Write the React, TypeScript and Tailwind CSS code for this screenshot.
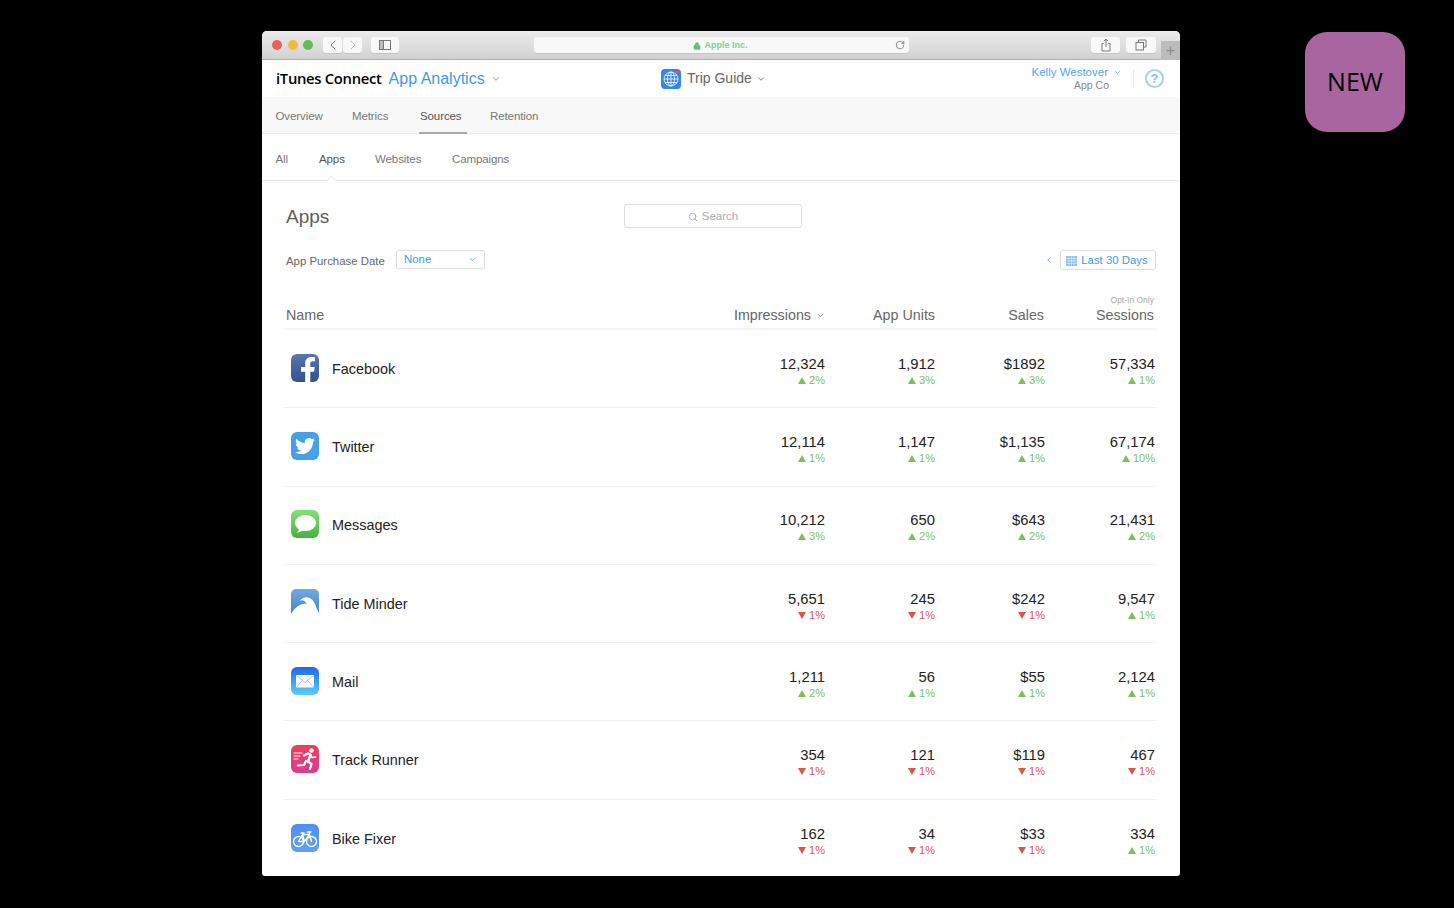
import type { ReactNode } from "react"
import { ChevronDown, ChevronLeft, ChevronRight, RotateCw, Search, Lock } from "lucide-react"
import { FaFacebookF, FaTwitter } from "react-icons/fa"

type Stat = [string, number]
interface Row {
    name: string
    icon: ReactNode
    stats: Stat[]
}

const iconBox = "w-7 h-7 rounded-[6px] flex items-center justify-center overflow-hidden shrink-0"

const rows: Row[] = [
    {
        name: "Facebook",
        icon: (
            <div className={`${iconBox} bg-linear-to-b from-[#5a76b0] to-[#35508f]`}>
                <FaFacebookF className="text-white w-[26px] h-[26px] translate-x-[3px] translate-y-[2px]" />
            </div>
        ),
        stats: [["12,324", 2], ["1,912", 3], ["$1892", 3], ["57,334", 1]],
    },
    {
        name: "Twitter",
        icon: (
            <div className={`${iconBox} bg-[#45a0e9]`}>
                <FaTwitter className="text-white w-[20px] h-[20px]" />
            </div>
        ),
        stats: [["12,114", 1], ["1,147", 1], ["$1,135", 1], ["67,174", 10]],
    },
    {
        name: "Messages",
        icon: (
            <div className={`${iconBox} bg-linear-to-b from-[#86e27c] to-[#47b03f]`}>
                <svg viewBox="0 0 28 28" className="w-7 h-7">
                    <ellipse cx="14.5" cy="13" rx="10.5" ry="8" fill="#fff" />
                    <path d="M8 18c0 2-1 3.500-2.500 4.500 3 0 5-1 6.500-2.500z" fill="#fff" />
                </svg>
            </div>
        ),
        stats: [["10,212", 3], ["650", 2], ["$643", 2], ["21,431", 2]],
    },
    {
        name: "Tide Minder",
        icon: (
            <div className="w-7 h-7 shrink-0">
                <svg viewBox="0 0 28 28" className="w-7 h-7">
                    <defs>
                        <linearGradient id="tide" x1="0" y1="0" x2="0" y2="1">
                            <stop offset="0" stopColor="#74a9dd" />
                            <stop offset="1" stopColor="#3f86d2" />
                        </linearGradient>
                    </defs>
                    <path d="M5 0h18a5 5 0 0 1 5 5v19c-2-3-3.500-9-6-12.500C19 7.500 12.500 6.500 8.500 12c2.500-1.500 6-.5 7 3C10 14 4 18 0 25V5a5 5 0 0 1 5-5z" fill="url(#tide)" />
                </svg>
            </div>
        ),
        stats: [["5,651", -1], ["245", -1], ["$242", -1], ["9,547", 1]],
    },
    {
        name: "Mail",
        icon: (
            <div className={`${iconBox} bg-linear-to-b from-[#2168e6] to-[#5fcdf8]`}>
                <svg viewBox="0 0 28 28" className="w-7 h-7" fill="none">
                    <rect x="5" y="8" width="18" height="12.500" rx="1" fill="#fff" />
                    <path d="M5.500 8.500 14 15.500l8.500-7M5.500 20l6-6.500M22.500 20l-6-6.500" stroke="#8cc4f3" strokeWidth="0.9" />
                </svg>
            </div>
        ),
        stats: [["1,211", 2], ["56", 1], ["$55", 1], ["2,124", 1]],
    },
    {
        name: "Track Runner",
        icon: (
            <div className={`${iconBox} bg-linear-to-b from-[#ee3e58] to-[#d93c8c]`}>
                <svg viewBox="0 0 28 28" className="w-7 h-7" fill="none" stroke="#fff" strokeLinecap="round" strokeLinejoin="round">
                    <circle cx="20.500" cy="5.500" r="2.300" fill="#fff" stroke="none" />
                    <path d="M3 8h8M3 11h6M3 14h4" strokeWidth="1" />
                    <path d="M13 10.500l4-2 2.500 1-2.500 7" strokeWidth="2.400" />
                    <path d="M19.500 10l1.500 2.500 3.500-.5" strokeWidth="1.700" />
                    <path d="M17 16.500l3.500 2.500-1.500 5" strokeWidth="2.200" />
                    <path d="M15 16l-2 4-6 .5" strokeWidth="2.200" />
                </svg>
            </div>
        ),
        stats: [["354", -1], ["121", -1], ["$119", -1], ["467", -1]],
    },
    {
        name: "Bike Fixer",
        icon: (
            <div className={`${iconBox} bg-linear-to-b from-[#4d8ff0] to-[#5fa3ef]`}>
                <svg viewBox="0 0 28 28" className="w-7 h-7" fill="none" stroke="#fff" strokeWidth="1.400" strokeLinejoin="round" strokeLinecap="round">
                    <circle cx="7.500" cy="17.500" r="5" />
                    <circle cx="20.500" cy="17.500" r="5" />
                    <path d="M7.500 17.500l4-7h7l2 7M18.500 10.500l-5 7h-6M11.500 10.500l2 7M18 8l.5 2.500M16.500 8H20M10 9h3" />
                </svg>
            </div>
        ),
        stats: [["162", -1], ["34", -1], ["$33", -1], ["334", 1]],
    },
]

const Delta = ({ value }: { value: number }) => {
    const up = value > 0
    return (
        <div className={`flex items-center justify-end gap-[3px] mt-px text-[11px] leading-[13px] ${up ? "text-[#7dbf5e]" : "text-[#d8574c]"}`}>
            <svg viewBox="0 0 8 7" className="w-2 h-[7px]">
                <path d={up ? "M4 0l4 7H0z" : "M4 7L0 0h8z"} fill="currentColor" />
            </svg>
            <span>{Math.abs(value)}%</span>
        </div>
    )
}

const ToolButton = ({ className, children }: { className: string; children?: ReactNode }) => (
    <div className={`h-4 rounded-[3px] bg-[#f8f8f8] flex items-center justify-center shadow-[0_1px_0_#c4c4c4] ${className}`}>
        {children}
    </div>
)

const App = () => {
    return (
        <div className="min-h-screen bg-black flex items-start pl-[262px] pt-[31px] font-['Liberation_Sans',sans-serif]">
            <div className="w-[918px] h-[845px] bg-white rounded-t-[5px] rounded-b-[3px] overflow-hidden shrink-0">
                {/* toolbar */}
                <div className="h-[29px] flex bg-linear-to-b from-[#ebebeb] to-[#d2d2d2] border-b border-[#b2b2b2]">
                    <div className="flex items-center gap-[5.500px] pl-[10px]">
                        <span className="w-[10px] h-[10px] rounded-full bg-[#ee5f57]" />
                        <span className="w-[10px] h-[10px] rounded-full bg-[#f5b83f]" />
                        <span className="w-[10px] h-[10px] rounded-full bg-[#5cc04a]" />
                    </div>
                    <div className="flex items-center ml-[10px] gap-px">
                        <ToolButton className="w-[19px]"><ChevronLeft className="w-4 h-4 text-[#777]" strokeWidth={1.5} /></ToolButton>
                        <ToolButton className="w-[19px]"><ChevronRight className="w-4 h-4 text-[#bbb]" strokeWidth={1.5} /></ToolButton>
                    </div>
                    <div className="flex items-center ml-[9px]">
                        <ToolButton className="w-[28px]">
                            <svg viewBox="0 0 12 10" className="w-3 h-[10px]" fill="none" stroke="#777">
                                <rect x="0.5" y="0.5" width="11" height="9" />
                                <path d="M4.500 0.500v9" />
                                <rect x="1" y="1" width="3" height="8" fill="#bbb" stroke="none" />
                            </svg>
                        </ToolButton>
                    </div>
                    <div className="flex items-center ml-[135px]">
                        <ToolButton className="w-[375px] relative pt-px pr-[2px]">
                            <Lock className="w-2 h-2 text-[#62c07f] mr-[3px]" fill="currentColor" />
                            <span className="text-[9px] font-bold text-[#7fcf9a]">Apple Inc.</span>
                            <RotateCw className="absolute right-[4px] top-[3px] w-[10px] h-[10px] text-[#777]" />
                        </ToolButton>
                    </div>
                    <div className="flex items-center ml-auto gap-[6px]">
                        <ToolButton className="w-[29px]">
                            <svg viewBox="0 0 12 14" className="w-3 h-[14px]" fill="none" stroke="#777">
                                <path d="M3.500 5.500H2v7.500h8V5.500H8.500M6 9V1M4 3l2-2 2 2" />
                            </svg>
                        </ToolButton>
                        <ToolButton className="w-[30px]">
                            <svg viewBox="0 0 12 12" className="w-3 h-3" fill="none" stroke="#777">
                                <path d="M3.500 3V1h7.500v7H8.500" />
                                <rect x="1" y="3.500" width="7.500" height="7.500" />
                            </svg>
                        </ToolButton>
                    </div>
                    <div className="ml-[5px] w-[19px] h-[19px] mt-[10px] bg-[#bcbcbc] text-[#8a8a8a] flex items-center justify-center text-[16px] leading-none">+</div>
                </div>

                {/* app header */}
                <div className="h-[37px] flex items-center">
                    <div className="w-[399px] flex items-baseline pl-[14px]">
                        <span className="font-['Open_Sans',sans-serif] font-semibold text-[14.800px] tracking-[-0.3px] text-black">iTunes Connect</span>
                        <span className="ml-[7px] text-[16px] text-[#3f97f6]">App Analytics</span>
                        <ChevronDown className="ml-[6px] w-[10px] h-[10px] text-[#3f97f6] self-center" />
                    </div>
                    <div className="flex items-center">
                        <div className="w-5 h-5 rounded-[4px] bg-[#3585f1] relative flex items-center justify-center">
                            <svg viewBox="0 0 16 16" className="w-4 h-4" fill="none" stroke="#fff" strokeWidth="0.8">
                                <circle cx="8" cy="8" r="7" />
                                <ellipse cx="8" cy="8" rx="3.500" ry="7" />
                                <path d="M8 1v14M1 8h14M2 4.500h12M2 11.500h12" />
                            </svg>
                            <span className="absolute right-[1px] top-[1px] w-[4px] h-[4px] rounded-full bg-[#e8544a]" />
                        </div>
                        <span className="ml-[6px] text-[14px] text-[#666]">Trip Guide</span>
                        <ChevronDown className="ml-[4px] w-[10px] h-[10px] text-[#666]" />
                    </div>
                    <div className="ml-auto flex items-center pr-[16px]">
                        <div className="flex flex-col items-end pt-[1px] mr-[11px]">
                            <div className="flex items-center text-[11.500px] leading-[13px] text-[#56a6f8]">
                                Kelly Westover
                                <ChevronDown className="ml-[5px] w-[9px] h-[9px]" />
                            </div>
                            <div className="text-[10.500px] leading-[13px] text-[#888] mr-[13px]">App Co</div>
                        </div>
                        <div className="w-px h-[18px] bg-[#e8e8e8]" />
                        <div className="ml-[11px] w-[19px] h-[19px] rounded-full border-2 border-[#a9cff2] text-[#8fbfec] text-[13px] font-bold leading-none flex items-center justify-center">?</div>
                    </div>
                </div>

                {/* main tabs */}
                <div className="h-[37px] bg-[#f8f8f8] border-b border-[#ececec] flex pl-[13.500px] text-[11.500px] tracking-[-0.1px] text-[#777]">
                    <div className="flex items-center w-[76.500px] pt-[4px]">Overview</div>
                    <div className="flex items-center w-[67px] pt-[4px]">Metrics</div>
                    <div className="flex items-center pl-[1px] w-[48px] text-[#555] border-b-[2px] border-[#aaa] h-[37px] pt-[5px]">Sources</div>
                    <div className="flex items-center ml-[23px] pt-[4px]">Retention</div>
                </div>

                {/* sub tabs */}
                <div className="h-[47px] border-b border-[#e9e9e9] flex items-center pl-[13.500px] pt-[5px] text-[11.500px] tracking-[-0.1px] text-[#777] relative">
                    <span className="w-[43.500px]">All</span>
                    <span className="w-[56px] text-[#555]">Apps</span>
                    <span className="w-[77px]">Websites</span>
                    <span>Campaigns</span>
                    <span className="absolute left-[66px] bottom-[-4px] w-[7px] h-[7px] rotate-45 bg-white border-l border-t border-[#e9e9e9]" />
                </div>

                {/* content */}
                <div className="px-[24px] pt-[23px] h-[113px]">
                    <div className="flex items-center h-[24px]">
                        <h1 className="text-[19px] font-normal text-[#5c5c5c] w-[338px] pt-[2px]">Apps</h1>
                        <div className="w-[178px] h-[24px] border border-[#dedede] rounded-[3px] flex items-center justify-center text-[11.500px] text-[#aaa] pt-px">
                            <Search className="w-[10px] h-[10px] mr-[4px]" />
                            Search
                        </div>
                    </div>
                    <div className="flex items-center h-[20px] mt-[22px] text-[11.400px]">
                        <span className="text-[#666] w-[110px] pt-[3px]">App Purchase Date</span>
                        <div className="w-[89px] h-[19px] -mt-[1px] border border-[#dedede] rounded-[3px] flex items-center justify-between pl-[7px] pr-[7px] text-[#3f97f6]">
                            None
                            <ChevronDown className="w-[9px] h-[9px]" />
                        </div>
                        <ChevronLeft className="ml-auto mr-[6px] w-[10px] h-[10px] text-[#3f97f6]" />
                        <div className="w-[96px] h-[20px] pt-px pr-[2px] border border-[#dedede] rounded-[3px] flex items-center justify-center gap-[4px] text-[#3f97f6]">
                            <svg viewBox="0 0 11 10" className="w-[11px] h-[10px]">
                                <rect width="11" height="10" fill="#8cbdf2" />
                                <path d="M0 2.500h11M0 5h11M0 7.500h11M3 0v10M5.500 0v10M8 0v10" stroke="#fff" strokeWidth="0.5" />
                            </svg>
                            Last 30 Days
                        </div>
                    </div>
                </div>

                {/* table */}
                <div className="ml-[22px] mr-[23px]">
                    <div className="flex items-end h-[36px] pb-[4px] pl-[2px] pr-[3px] border-b-[2px] border-[#f5f5f5] text-[14.300px] leading-[18px] text-[#666]">
                        <div className="flex-1">Name</div>
                        <div className="w-[110px] flex items-center justify-end">
                            Impressions
                            <ChevronDown className="ml-[5px] w-[9px] h-[9px]" />
                        </div>
                        <div className="w-[110px] text-right">App Units</div>
                        <div className="w-[109px] text-right">Sales</div>
                        <div className="w-[110px] text-right">
                            <div className="text-[8.500px] leading-[10px] mb-[1px] text-[#aaa]">Opt-In Only</div>
                            Sessions
                        </div>
                    </div>
                    {rows.map((row, i) => (
                        <div key={row.name} className={`h-[78.300px] flex items-center pl-[7px] pr-[2px] ${i < rows.length - 1 ? "border-b border-[#f1f1f1]" : ""}`}>
                            <div className="flex-1 flex items-center gap-[13px] text-[14.400px] text-[#222]">
                                <div className="mb-[2px]">{row.icon}</div>
                                <span className="pt-[2px]">{row.name}</span>
                            </div>
                            {row.stats.map(([num, delta], j) => (
                                <div key={j} className="w-[110px] text-right pt-[4px]">
                                    <div className="text-[14.800px] leading-[18px] text-[#222]">{num}</div>
                                    <Delta value={delta} />
                                </div>
                            ))}
                        </div>
                    ))}
                </div>
            </div>

            <div className="ml-[125px] mt-px w-[100px] h-[100px] rounded-[22px] bg-[#a8659f] flex items-center justify-center font-['Open_Sans',sans-serif] text-[25px] text-black shrink-0">
                NEW
            </div>
        </div>
    )
}

export default App
